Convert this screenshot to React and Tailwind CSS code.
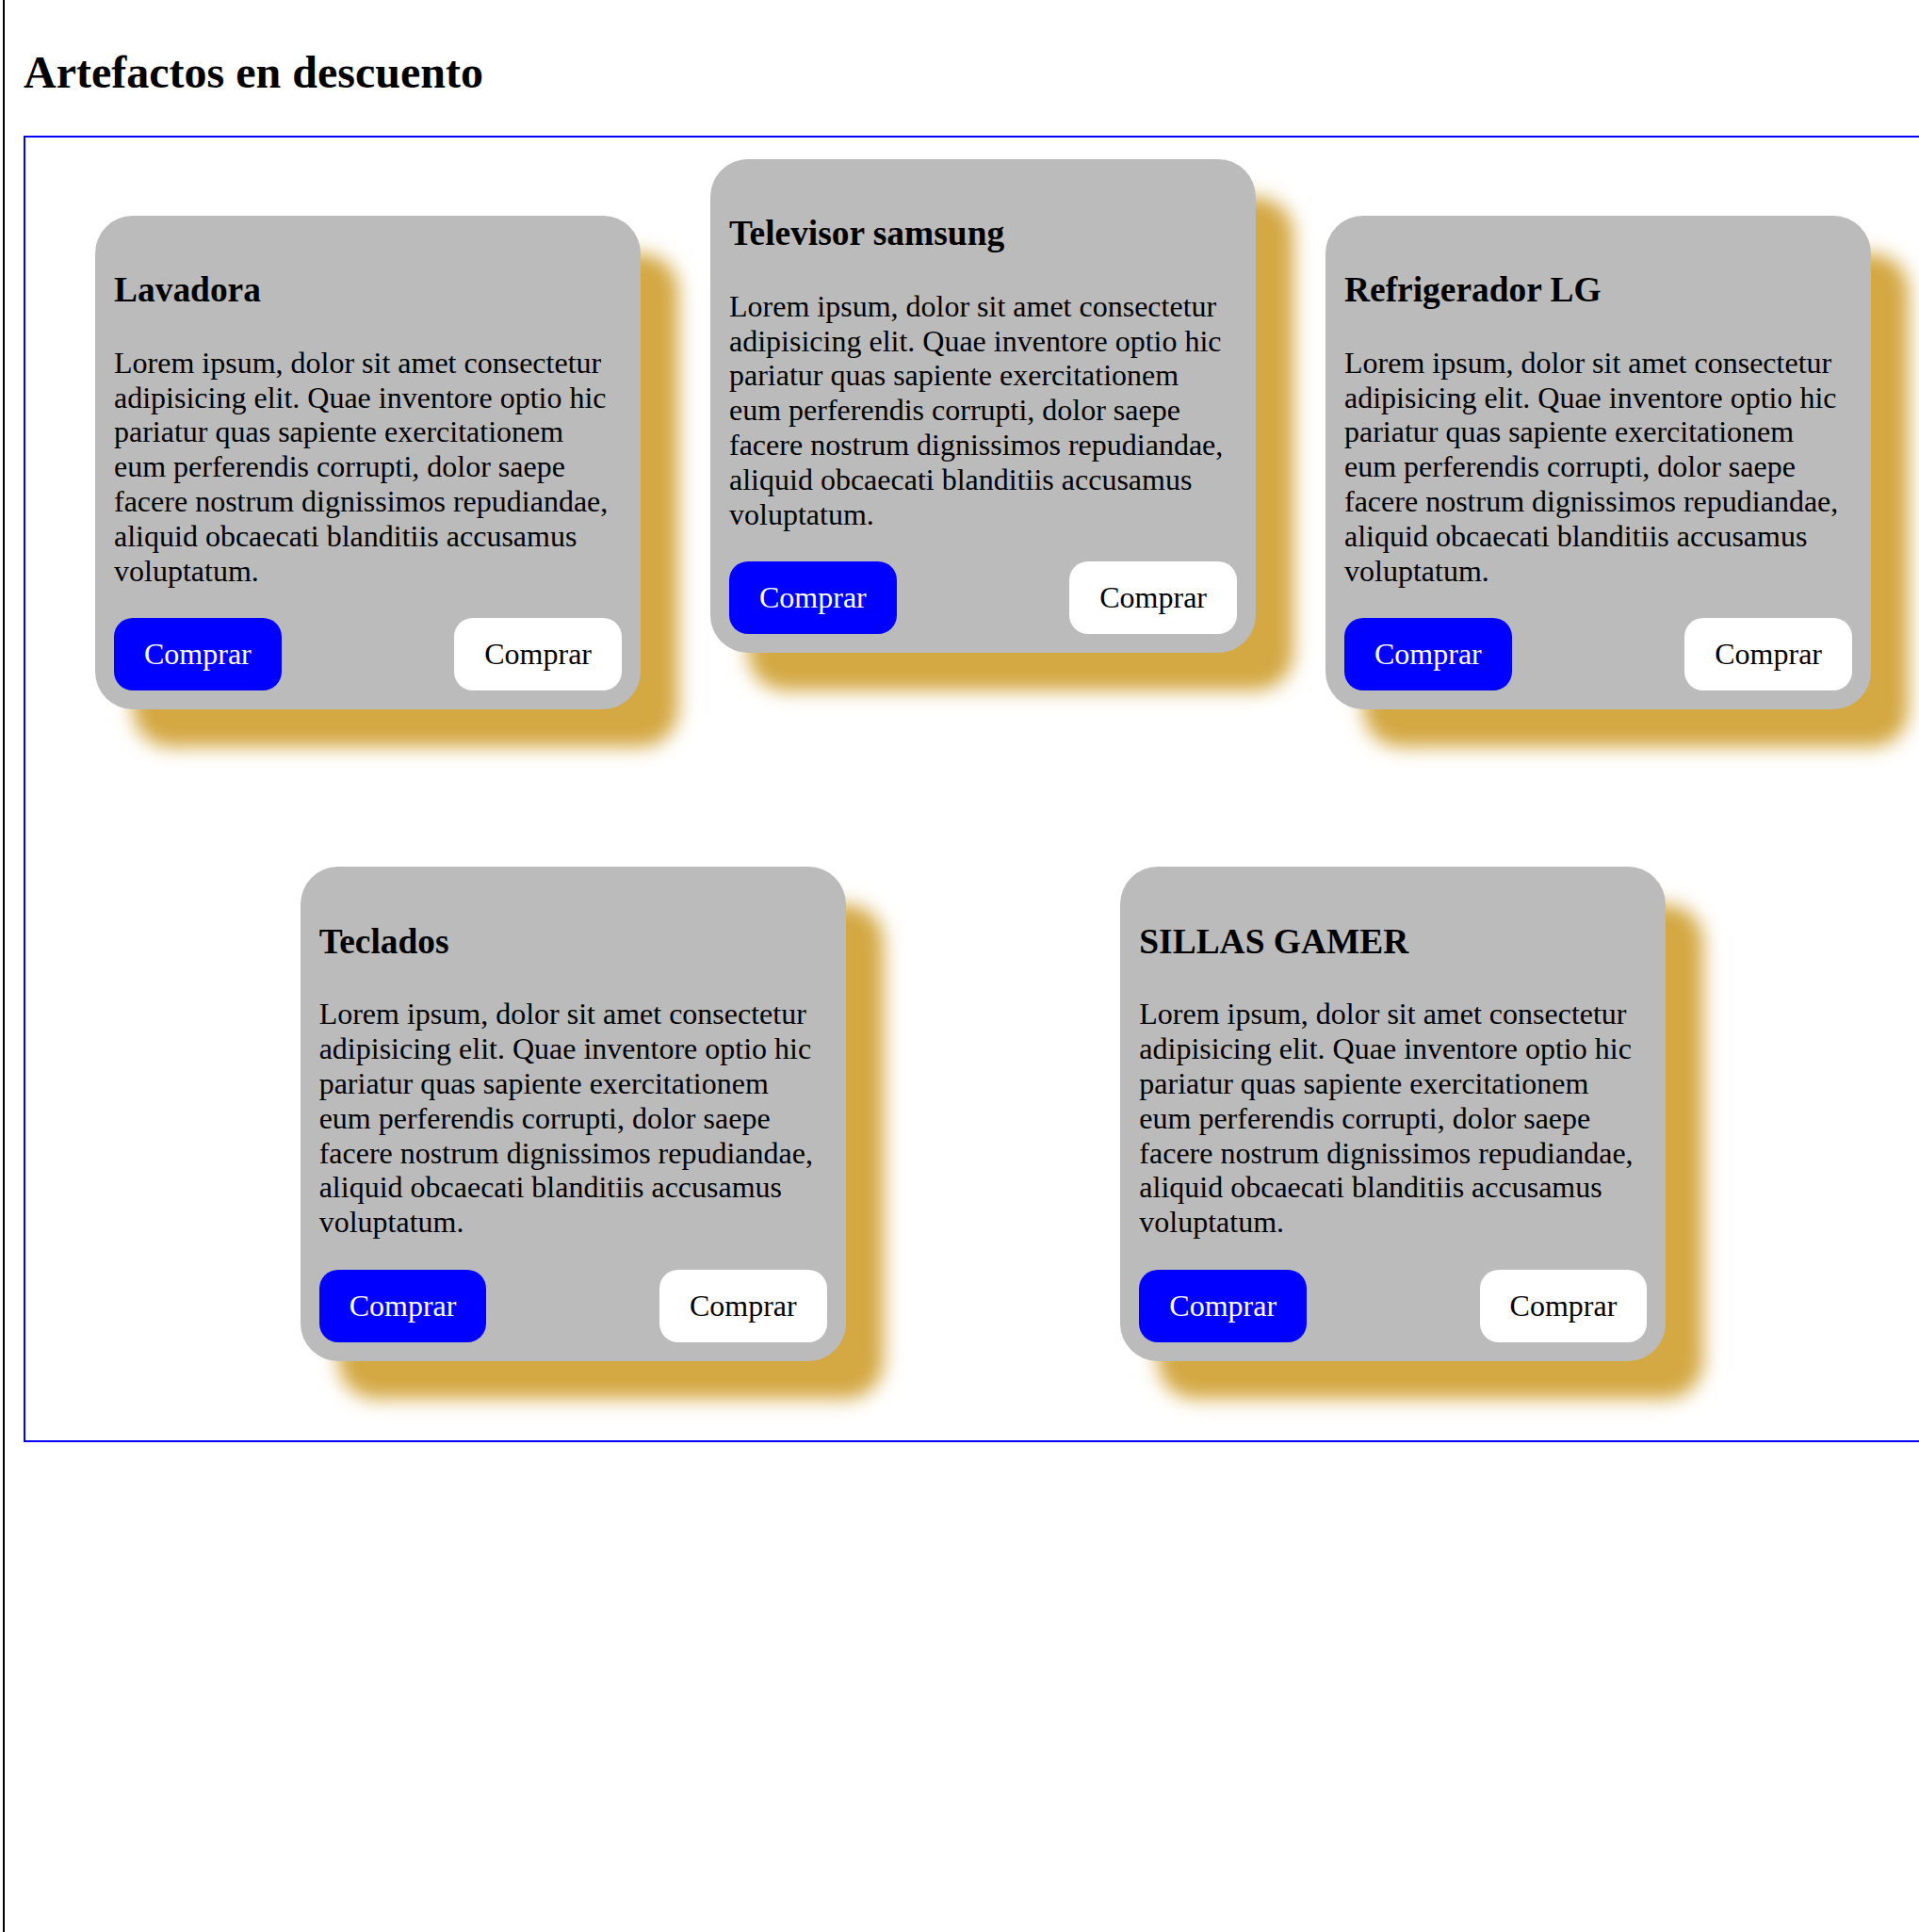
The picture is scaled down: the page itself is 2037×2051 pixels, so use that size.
const LOREM =
  "Lorem ipsum, dolor sit amet consectetur adipisicing elit. Quae inventore optio hic pariatur quas sapiente exercitationem eum perferendis corrupti, dolor saepe facere nostrum dignissimos repudiandae, aliquid obcaecati blanditiis accusamus voluptatum.";

const cards = [
  { title: "Lavadora", lifted: false },
  { title: "Televisor samsung", lifted: true },
  { title: "Refrigerador LG", lifted: false },
  { title: "Teclados", lifted: false },
  { title: "SILLAS GAMER", lifted: false },
];

function Card({ title, lifted }) {
  return (
    <div
      className={
        "mt-[83px] mb-[84px] w-[579px] rounded-[40px] bg-[#bbbbbb] p-[20px] text-black shadow-[40px_40px_20px_#d4a843] " +
        (lifted ? "-translate-y-[60px]" : "")
      }
    >
      <h3 className="mt-[37.44px] mb-[37.44px] text-[37.44px] font-bold leading-[43px]">
        {title}
      </h3>
      <p className="mb-[32px] text-[32px] leading-[36.8px]">{LOREM}</p>
      <div className="flex items-center justify-between">
        <button className="rounded-[20px] bg-[#0000ff] px-[32px] py-[20px] text-[32px] leading-[37px] text-white">
          Comprar
        </button>
        <button className="rounded-[20px] bg-white px-[32px] py-[20px] text-[32px] leading-[37px] text-black">
          Comprar
        </button>
      </div>
    </div>
  );
}

export default function App() {
  return (
    <div className="min-h-[2051px] w-full overflow-hidden bg-white pl-[3px] font-['Liberation_Serif','Times_New_Roman',serif] text-black">
      <div className="min-h-[2051px] border-l-2 border-black pl-[20px] pt-[49px]">
        <h2 className="text-[48px] font-bold leading-[55px]">Artefactos en descuento</h2>
        <div className="mt-[40px] flex w-[2037px] flex-wrap justify-evenly border-2 border-[#0000ff]">
          {cards.map((c) => (
            <Card key={c.title} title={c.title} lifted={c.lifted} />
          ))}
        </div>
      </div>
    </div>
  );
}
